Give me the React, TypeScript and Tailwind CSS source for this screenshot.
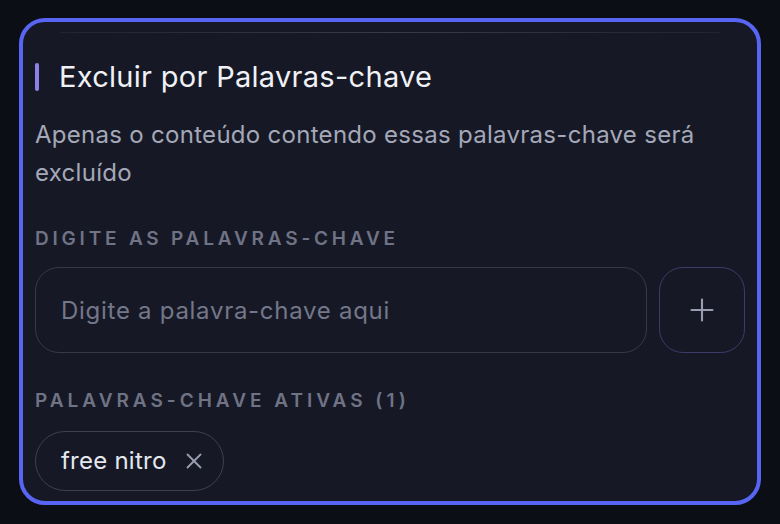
import { Plus, X } from 'lucide-react';

// Keyword exclusion card
export default function App() {
  const keywords = ['free nitro'];

  return (
    <div className="min-h-screen bg-[#0c0e16] px-[19px] pt-[18px] pb-[19px] font-['Inter','Noto_Sans',sans-serif] antialiased">
      <div className="h-[487px] rounded-[26px] border-4 border-[#5865f2] bg-[#161925] px-3">
        <div className="mx-[25px] mt-[10px] h-px bg-gradient-to-r from-white/5 via-white/15 to-white/5" />

        {/* Header */}
        <div className="mt-[26px] flex items-center gap-5">
          <span className="h-7 w-1 rounded-full bg-[#8f80e6]" />
          <h2 className="text-[29px] leading-[36px] font-normal tracking-[0.01em] text-[#f0f1f6]">Excluir por Palavras-chave</h2>
        </div>

        <p className="mt-[21px] text-[24px] leading-[38px] tracking-[0.012em] text-[#a4a8b8]">
          Apenas o conteúdo contendo essas palavras-chave será excluído
        </p>

        <label className="mt-[35px] block text-[19px] leading-6 font-semibold uppercase tracking-[0.2em] text-[#6f7385]">
          Digite as palavras-chave
        </label>

        <div className="mt-4 flex gap-3">
          <input
            type="text"
            placeholder="Digite a palavra-chave aqui"
            className="h-[86px] min-w-0 flex-1 rounded-[24px] border border-[#363946] bg-transparent px-[25px] text-[24px] tracking-[0.03em] text-[#e5e7ef] placeholder:text-[#737789] outline-none"
          />
          <button className="flex h-[86px] w-[86px] items-center justify-center rounded-[24px] border border-[#3c3b68] text-[#9a9db0]">
            <Plus size={36} strokeWidth={1.4} />
          </button>
        </div>

        <div className="mt-9 text-[19px] leading-6 font-semibold uppercase tracking-[0.21em] text-[#6f7385]">
          Palavras-chave ativas ({keywords.length})
        </div>

        <div className="mt-[18px] flex flex-wrap gap-2">
          {keywords.map((k) => (
            <span
              key={k}
              className="flex h-[60px] items-center gap-[14px] rounded-full border border-[#3d404d] pl-[25px] pr-4 text-[24px] tracking-[0.01em] text-[#e5e7ef]"
            >
              {k}
              <X size={26} strokeWidth={1.7} className="text-[#9a9db0]" />
            </span>
          ))}
        </div>
      </div>
    </div>
  );
}
